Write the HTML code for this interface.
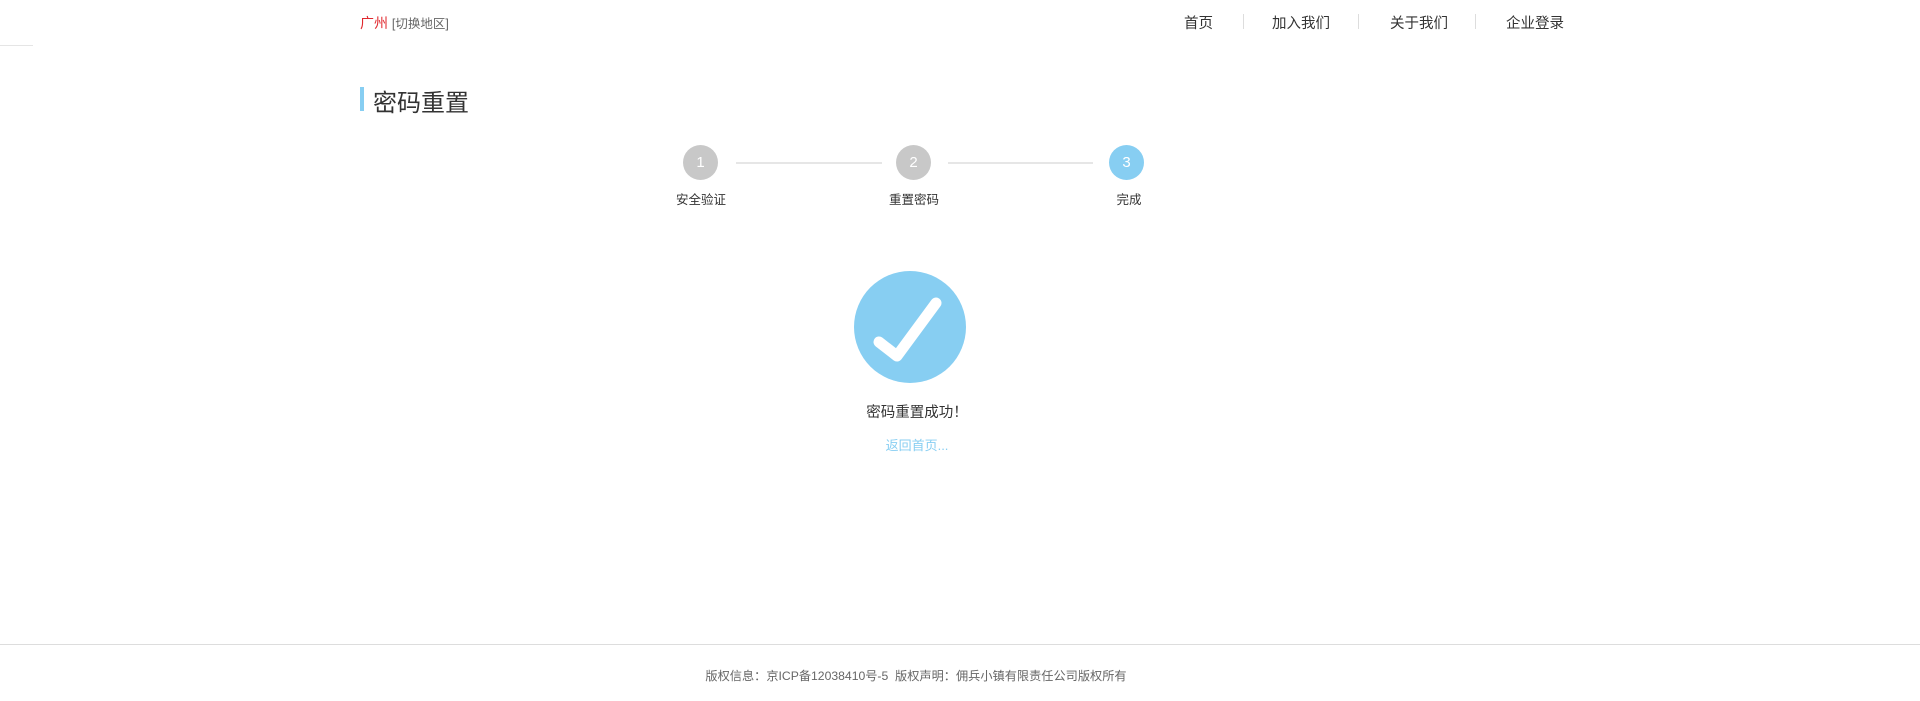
<!DOCTYPE html>
<html><head><meta charset="utf-8"><style>
*{margin:0;padding:0;box-sizing:border-box}
body{width:1920px;height:701px;position:relative;background:#fff;font-family:"Liberation Sans","Noto Sans CJK SC",sans-serif;color:#333;overflow:hidden}
.a{position:absolute;white-space:nowrap}
.nav{font-size:14.5px;color:#333;top:12px}
.sep{position:absolute;top:14px;width:1px;height:15px;background:#ddd}
.c{position:absolute;width:35px;height:35px;border-radius:50%;background:#c8c8c8;color:#fff;font-size:15px;text-align:center;line-height:35px;top:145px}
.ln{position:absolute;top:162px;height:2px;background:#e6e6e6}
.lb{font-size:12.5px;top:189px;transform:translateX(-50%)}
</style></head><body>
<div class="a" style="left:0;top:45px;width:33px;height:1px;background:#e5e5e5"></div>
<div class="a" style="left:360px;top:13px;font-size:14px;color:#e0282e">广州 <span style="font-size:12.5px;color:#666">[切换地区]</span></div>
<div class="a nav" style="left:1184px">首页</div>
<div class="sep" style="left:1243px"></div>
<div class="a nav" style="left:1272px">加入我们</div>
<div class="sep" style="left:1358px"></div>
<div class="a nav" style="left:1390px">关于我们</div>
<div class="sep" style="left:1475px"></div>
<div class="a nav" style="left:1506px">企业登录</div>
<div class="a" style="left:360px;top:87px;width:4px;height:24px;background:#87cef2"></div>
<div class="a" style="left:373px;top:83px;font-size:24px;color:#333">密码重置</div>
<div class="c" style="left:683px">1</div>
<div class="ln" style="left:736px;width:146px"></div>
<div class="c" style="left:896px">2</div>
<div class="ln" style="left:948px;width:145px"></div>
<div class="c" style="left:1109px;background:#87cef2">3</div>
<div class="a lb" style="left:701px">安全验证</div>
<div class="a lb" style="left:914px">重置密码</div>
<div class="a lb" style="left:1129px">完成</div>
<svg class="a" style="left:854px;top:271px" width="112" height="112" viewBox="0 0 112 112">
<circle cx="56" cy="56" r="56" fill="#87cef2"/>
<path d="M25 71 L43 85 L82 32" fill="none" stroke="#fff" stroke-width="11" stroke-linecap="round" stroke-linejoin="round"/>
</svg>
<div class="a" style="left:917px;top:401px;font-size:14.5px;transform:translateX(-50%)">密码重置成功！</div>
<div class="a" style="left:917px;top:435px;font-size:13px;color:#87cef2;transform:translateX(-50%)">返回首页...</div>
<div class="a" style="left:0;top:644px;width:1920px;height:1px;background:#ddd"></div>
<div class="a" style="left:916px;top:666px;font-size:12.2px;color:#666;transform:translateX(-50%)">版权信息：京ICP备12038410号-5&nbsp; 版权声明：佣兵小镇有限责任公司版权所有</div>
</body></html>
